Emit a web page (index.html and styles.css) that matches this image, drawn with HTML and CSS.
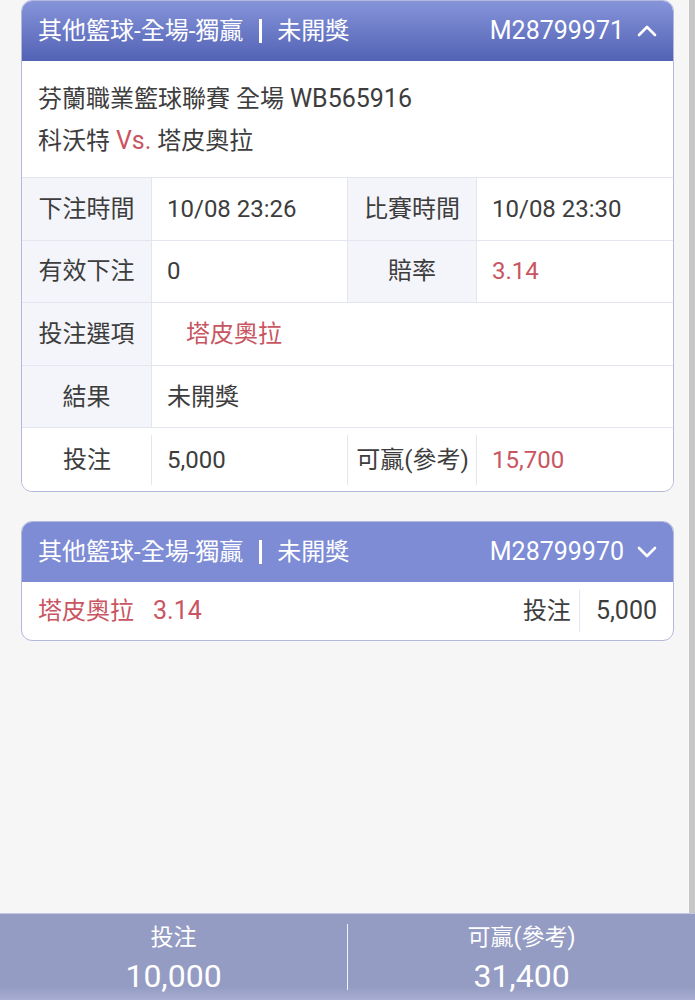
FILE: index.html
```html
<!DOCTYPE html>
<html>
<head>
  <link rel="stylesheet" href="styles.css">
</head>
<body>
  <div class="screen">
    <div class="scroll-area">
      <div class="content">

        <div class="bet-card">
          <div class="card-head open">
            <div class="head-title">其他籃球-全場-獨贏<span class="bar"></span>未開獎</div>
            <div class="head-id"><span class="num">M28799971</span>
              <svg class="chevron" width="20" height="14" viewBox="0 0 20 14"><polyline points="2,11 10,3 18,11" fill="none" stroke="#fff" stroke-width="2.6" stroke-linecap="round" stroke-linejoin="round"/></svg>
            </div>
          </div>
          <div class="match-info">
            <div>芬蘭職業籃球聯賽 全場 <span class="num">WB565916</span></div>
            <div>科沃特 <span class="red num">Vs.</span> 塔皮奧拉</div>
          </div>
          <div class="detail-grid">
            <div class="cell label">下注時間</div>
            <div class="cell value num">10/08 23:26</div>
            <div class="cell label">比賽時間</div>
            <div class="cell value num">10/08 23:30</div>

            <div class="cell label">有效下注</div>
            <div class="cell value num">0</div>
            <div class="cell label">賠率</div>
            <div class="cell value red num">3.14</div>

            <div class="cell label">投注選項</div>
            <div class="cell value wide red pick">塔皮奧拉</div>

            <div class="cell label">結果</div>
            <div class="cell value wide">未開獎</div>

            <div class="cell label last">投注</div>
            <div class="cell value last num">5,000</div>
            <div class="cell label last">可贏(參考)</div>
            <div class="cell value last red num">15,700</div>
          </div>
        </div>

        <div class="bet-card">
          <div class="card-head closed">
            <div class="head-title">其他籃球-全場-獨贏<span class="bar"></span>未開獎</div>
            <div class="head-id"><span class="num">M28799970</span>
              <svg class="chevron" width="20" height="14" viewBox="0 0 20 14"><polyline points="2,3 10,11 18,3" fill="none" stroke="#fff" stroke-width="2.6" stroke-linecap="round" stroke-linejoin="round"/></svg>
            </div>
          </div>
          <div class="summary-row">
            <div class="red">塔皮奧拉<span class="odds num">3.14</span></div>
            <div class="summary-stake">
              <span class="stake-label">投注</span>
              <span class="stake-value num">5,000</span>
            </div>
          </div>
        </div>

      </div>
      <div class="scrollbar"></div>
    </div>

    <div class="footer">
      <div class="total">
        <div class="total-label">投注</div>
        <div class="total-value">10,000</div>
      </div>
      <div class="divider"></div>
      <div class="total">
        <div class="total-label">可贏(參考)</div>
        <div class="total-value">31,400</div>
      </div>
    </div>
  </div>
</body>
</html>
```

FILE: styles.css
```css
body {
  margin: 0;
  font-family: Roboto, 'Noto Sans CJK TC', sans-serif;
  background-color: #f6f6f6;
  color: #3d3d3d;
  line-height: 32px;
}

.screen {
  width: 695px;
  height: 1000px;
  display: flex;
  flex-direction: column;
  overflow: hidden;
}

.scroll-area {
  height: 914px;
  display: flex;
}

.content {
  flex: 1;
  padding: 0 14px 0 21px;
}

.scrollbar {
  box-sizing: border-box;
  width: 7px;
  background-color: #c6c6c6;
  border-left: 1px solid #fbfbfb;
}

.red {
  color: #c95562;
}

.num {
  font-size: 25px;
}

.bet-card {
  background-color: #fff;
  border: 1px solid #b4b8dc;
  border-radius: 11px;
  overflow: hidden;
  margin-bottom: 29px;
}

.card-head {
  height: 60px;
  display: flex;
  justify-content: space-between;
  align-items: center;
  padding: 0 16px;
  color: #fff;
  font-size: 24px;
}

.card-head.open {
  background: linear-gradient(to bottom, #8694da, #5262b4);
}

.card-head.closed {
  background-color: #7d8cd5;
}

.head-title {
  display: flex;
  align-items: center;
}

.bar {
  width: 3px;
  height: 24px;
  background-color: #fff;
  margin: 0 15px 0 16px;
}

.head-id {
  display: flex;
  align-items: center;
  gap: 13px;
}

.match-info {
  padding: 17px 16px 15px;
  font-size: 24px;
  line-height: 42px;
  border-bottom: 1px solid #e3e5ef;
}

.detail-grid {
  display: grid;
  grid-template-columns: 130px 196px 129px 1fr;
}

.cell {
  box-sizing: border-box;
  height: 62.6px;
  display: flex;
  align-items: center;
  font-size: 24px;
  border-bottom: 1px solid #e3e5ef;
  border-right: 1px solid #e3e5ef;
}

.cell:nth-child(4n) {
  border-right: none;
}

.label {
  justify-content: center;
  background-color: #f4f5fa;
  white-space: nowrap;
}

.value {
  padding-left: 15px;
  background-color: #fff;
}

.wide {
  grid-column: span 3;
  border-right: none;
}

.pick {
  padding-left: 34px;
}

.cell.last {
  background-color: #fff;
  border-bottom: none;
  border-right: none;
  position: relative;
}

.cell.last:not(:last-child)::after {
  content: '';
  position: absolute;
  right: 0;
  top: 7px;
  bottom: 6px;
  border-right: 1px solid #e3e5ef;
}

.summary-row {
  height: 58px;
  display: flex;
  justify-content: space-between;
  align-items: center;
  padding: 0 16px;
  font-size: 24px;
}

.odds {
  margin-left: 19px;
}

.summary-stake {
  display: flex;
  align-items: center;
  height: 42px;
}

.stake-label {
  padding-right: 8px;
  border-right: 1px solid #e3e5ef;
  line-height: 42px;
}

.stake-value {
  padding-left: 16px;
}

.footer {
  height: 86px;
  display: flex;
  align-items: center;
  background: linear-gradient(to bottom, #949cc3 85%, #a9afd3);
  color: #fff;
  border-top: 1px solid #c4c8e2;
}

.total {
  flex: 1;
  text-align: center;
}

.total-label {
  font-size: 23px;
  line-height: 32px;
  margin-top: -2px;
}

.total-value {
  font-size: 32px;
  line-height: 44px;
  margin-bottom: -8px;
}

.divider {
  width: 1px;
  height: 66px;
  background-color: #f2f3fa;
}
```
